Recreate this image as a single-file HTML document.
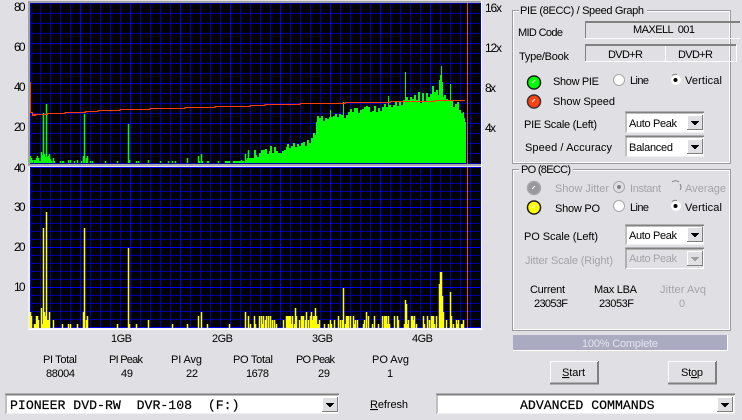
<!DOCTYPE html>
<html><head><meta charset="utf-8"><title>Scan</title>
<style>
html,body{margin:0;padding:0;background:#e0dfe3;width:742px;height:420px;overflow:hidden}
svg{display:block}
text{font-family:"Liberation Sans",sans-serif;font-size:11px;fill:#000;white-space:pre}
.a{font-size:12px}
.d{fill:#a4a4a8}
.m{font-family:"Liberation Mono",monospace;font-size:13.2px;stroke:#000;stroke-width:.2px}
</style></head><body>
<svg width="742" height="420" viewBox="0 0 742 420" xmlns="http://www.w3.org/2000/svg">
<defs>
<pattern id="vg" width="10" height="10" patternUnits="userSpaceOnUse"><rect width="1" height="10" fill="#0000b4"/></pattern>
<pattern id="ht" y="3" width="10" height="10" patternUnits="userSpaceOnUse"><rect width="10" height="1" fill="#0000a8"/></pattern>
<pattern id="hb" y="167" width="8" height="8" patternUnits="userSpaceOnUse"><rect width="8" height="1" fill="#0000a8"/></pattern>
<g id="arr" shape-rendering="crispEdges">
<rect width="16" height="15" fill="#e0dfe3"/>
<path d="M0 .5H15.5M.5 0V15" stroke="#fff" fill="none"/>
<path d="M0 14.5H16M15.5 0V15" stroke="#808080" fill="none"/>
<path d="M4 6h8v1h-1v1h-1v1h-1v1h-2v-1h-1v-1h-1v-1h-1z" fill="#000"/>
</g>
<g id="arrd" shape-rendering="crispEdges">
<rect width="16" height="15" fill="#e0dfe3"/>
<path d="M0 .5H15.5M.5 0V15" stroke="#fff" fill="none"/>
<path d="M0 14.5H16M15.5 0V15" stroke="#808080" fill="none"/>
<path d="M4 6h8v1h-1v1h-1v1h-1v1h-2v-1h-1v-1h-1v-1h-1z" fill="#a0a0a0"/>
</g>
</defs>

<!-- chart frames -->
<g shape-rendering="crispEdges">
<rect x="28" y="1" width="454" height="329" fill="#f4f4f6"/>
<rect x="28" y="1" width="2" height="328" fill="#a0a0a4"/>
<rect x="28" y="1" width="453" height="2" fill="#a0a0a4"/>
<rect x="30" y="3" width="451" height="161" fill="#000"/>
<rect x="30" y="167" width="451" height="161" fill="#000"/>
<rect x="30" y="3" width="451" height="161" fill="url(#vg)"/>
<rect x="30" y="167" width="451" height="161" fill="url(#vg)"/>
<rect x="30" y="3" width="451" height="161" fill="url(#ht)"/>
<rect x="30" y="167" width="451" height="161" fill="url(#hb)"/>
<path d="M30.5 3V164M80.5 3V164M130.5 3V164M180.5 3V164M230.5 3V164M280.5 3V164M330.5 3V164M380.5 3V164M430.5 3V164M30.5 167V328M80.5 167V328M130.5 167V328M180.5 167V328M230.5 167V328M280.5 167V328M330.5 167V328M380.5 167V328M430.5 167V328" stroke="#0000ff" fill="none"/>
<path d="M30 43.5H481M30 83.5H481M30 123.5H481" stroke="#0000c8" fill="none"/>
<path d="M30 167.5H481M30 207.5H481M30 247.5H481M30 287.5H481M30 327.5H481" stroke="#0000ff" fill="none"/>
<rect x="28" y="164" width="453" height="2" fill="#a8a8ac"/>
<rect x="28" y="166" width="453" height="1" fill="#e8e8ec"/>
<rect x="28" y="329" width="454" height="1" fill="#fff"/>
<rect x="28" y="167" width="2" height="162" fill="#f0f0f4"/>
<rect x="481" y="1" width="1" height="329" fill="#fff"/>
</g>

<!-- green left -->
<g transform="translate(.5,0)">
<path stroke="#00ff00" stroke-width="1.5" fill="none" d="M30 156V163M31 158V163M32 160V163M34 160V163M35 160V163M36 158V163M37 156V163M38 158V163M39 161V163M40 161V163M41 152V163M42 155V163M43 113V163M44 154V163M45 157V163M46 104V163M47 157V163M48 156V163M49 154V163M50 159V163M51 161V163M53 158V163M54 161V163M60 161V163M62 161V163M63 161V163M68 160V163M70 160V163M74 161V163M77 160V163M81 161V163M83 156V163M84 114V163M86 158V163M87 156V163M90 161V163M92 161V163M105 161V163M117 161V163M128 124V163M129 160V163M136 161V163M138 161V163M148 160V163M160 161V163M168 161V163M172 161V163M175 161V163M187 158V163M198 156V163M199 161V163M201 154V163M202 161V163M207 161V163M208 161V163M218 161V163M225 161V163M226 161V163M227 161V163M228 161V163M229 161V163M233 161V163M234 161V163M235 161V163M236 161V163M237 161V163M238 161V163M239 161V163M240 161V163M241 160V163M242 161V163M243 161V163M245 154V163M246 160V163M247 158V163M248 150V163M249 158V163"/>
</g>
<!-- green right -->
<path shape-rendering="crispEdges" fill="#00ff00" d="M250 163V158H254V150H256V155H257V157H259V153H261V150H265V149H267V154H269V151H270V146H272V153H274V147H276V151H278V153H282V151H284V150H286V147H287V144H289V148H291V146H293V143H295V147H297V144H299V146H301V143H303V142H305V146H307V140H309V143H311V138H313V133H315V135H316V122H317V116H319V118H321V116H323V121H325V118H327V119H329V117H330V110H331V117H333V116H335V114H337V117H339V114H341V115H343V102H344V118H346V115H348V112H350V109H352V112H354V108H358V113H360V110H362V109H364V107H366V106H368V107H370V112H372V111H374V106H376V112H378V108H380V111H382V107H384V104H386V107H388V96H389V105H391V107H393V105H395V102H397V106H399V102H401V105H403V100H405V72H406V97H408V100H410V97H412V99H414V95H416V100H418V92H420V103H422V93H424V102H426V93H428V97H430V94H432V86H434V92H436V90H438V95H439V80H440V75H441V66H442V82H443V97H444V95H446V99H448V100H450V84H451V100H453V107H455V104H457V102H459V110H461V113H463V112H464V118H465V122H466V163Z"/>
<!-- red speed -->
<path shape-rendering="crispEdges" fill="none" stroke="#ff3c00" d="M30.5 82V112.5H32.5V115.5H36V114.5H47V113.5H65V112.5H85V111.5H98V110.5H120V109.5H150V108.5H185V107.5H215V106.5H250V105.5H265V104.5H300V103.5H345V102.5H390V101.5H435V100.5H465"/>
<path shape-rendering="crispEdges" fill="none" stroke="#ff3c00" d="M33 114.5H48M66 112.5H86M99 110.5H120M150 108.5H185M215 106.5H250M265 104.5H300"/>
<rect x="467" y="3" width="1" height="161" fill="#f04818"/>
<rect x="467" y="167" width="1" height="161" fill="#f04818"/>

<!-- yellow -->
<g transform="translate(.5,0)">
<path stroke="#ffff00" stroke-width="1.5" fill="none" d="M30 312V328M31 316V328M34 324V328M35 324V328M36 316V328M37 316V328M38 320V328M41 308V328M42 324V328M43 228V328M44 312V328M45 316V328M46 212V328M47 320V328M48 320V328M49 312V328M53 320V328M62 324V328M68 324V328M70 324V328M77 324V328M83 312V328M84 228V328M86 320V328M87 316V328M117 324V328M128 248V328M129 324V328M136 324V328M148 320V328M172 324V328M187 324V328M198 316V328M201 312V328M207 324V328M229 324V328M245 312V328M248 316V328M250 324V328M254 316V328M255 324V328M259 316V328M261 316V328M262 324V328M263 316V328M265 320V328M266 316V328M268 316V328M270 316V328M272 320V328M274 320V328M276 324V328M283 320V328M286 316V328M287 316V328M288 316V328M289 316V328M290 316V328M291 324V328M292 316V328M294 324V328M295 308V328M296 316V328M299 320V328M301 316V328M302 316V328M303 316V328M305 320V328M306 312V328M308 320V328M310 316V328M311 312V328M312 320V328M313 316V328M314 316V328M315 308V328M316 316V328M317 324V328M318 324V328M319 320V328M324 324V328M328 324V328M330 320V328M331 324V328M334 320V328M338 316V328M340 320V328M342 320V328M343 288V328M345 324V328M346 316V328M347 316V328M348 316V328M350 316V328M353 316V328M354 324V328M355 320V328M357 320V328M363 324V328M364 320V328M366 312V328M368 316V328M372 324V328M374 316V328M378 324V328M382 316V328M384 316V328M385 316V328M386 316V328M387 324V328M388 316V328M389 324V328M394 316V328M397 316V328M398 320V328M404 324V328M405 300V328M406 304V328M407 324V328M408 320V328M411 316V328M412 316V328M413 320V328M414 316V328M416 324V328M423 316V328M424 324V328M427 316V328M429 320V328M431 316V328M432 316V328M433 316V328M434 324V328M436 316V328M439 284V328M440 272V328M441 272V328M442 296V328M443 312V328M446 320V328M450 292V328M451 316V328M453 324V328M456 320V328M457 324V328M458 320V328M461 324V328M462 324V328M463 320V328"/>
</g>

<!-- axis labels -->
<text class="a" x="14" y="11" textLength="11.5">80</text><text class="a" x="14" y="51" textLength="11.5">60</text><text class="a" x="14" y="91" textLength="11.5">40</text><text class="a" x="14" y="131" textLength="11.5">20</text>
<text class="a" x="14" y="172" textLength="11.5">40</text><text class="a" x="14" y="211" textLength="11.5">30</text><text class="a" x="14" y="251" textLength="11.5">20</text><text class="a" x="14" y="291" textLength="11.5">10</text>
<text class="a" x="485" y="12" textLength="17">16x</text><text class="a" x="485" y="52" textLength="17">12x</text><text class="a" x="485" y="92" textLength="11">8x</text><text class="a" x="485" y="132" textLength="11">4x</text>
<text x="111" y="342" textLength="21">1GB</text><text x="212" y="342" textLength="21">2GB</text><text x="312" y="342" textLength="21">3GB</text><text x="412" y="342" textLength="21">4GB</text>

<!-- stats -->
<text x="43" y="363" textLength="34">PI Total</text><text x="46" y="377" textLength="29">88004</text>
<text x="109" y="363" textLength="34">PI Peak</text><text x="121" y="377" textLength="12">49</text>
<text x="171" y="363" textLength="31">PI Avg</text><text x="186" y="377" textLength="12">22</text>
<text x="233" y="363" textLength="40">PO Total</text><text x="246" y="377" textLength="23">1678</text>
<text x="296" y="363" textLength="39">PO Peak</text><text x="318" y="377" textLength="12">29</text>
<text x="372" y="363" textLength="37">PO Avg</text><text x="387" y="377">1</text>

<!-- group boxes -->
<g shape-rendering="crispEdges" fill="none">
<rect x="512.5" y="10.5" width="218" height="153" stroke="#9c9ca0"/>
<rect x="513.5" y="11.5" width="216" height="151" stroke="#fff"/>
<rect x="512.5" y="169.5" width="218" height="161" stroke="#9c9ca0"/>
<rect x="513.5" y="170.5" width="216" height="159" stroke="#fff"/>
<rect x="519" y="6" width="128" height="10" fill="#e0dfe3"/>
<rect x="519" y="165" width="54" height="10" fill="#e0dfe3"/>
<!-- MID / type fields -->
<path d="M585.5 38V22.5H740M585 21.5H740" stroke="#808080"/>
<path d="M585 38.5H740" stroke="#fff"/>
<path d="M585.5 62V45.5H736M585 44.5H736" stroke="#808080"/>
<path d="M585 61.5H737M665.5 46V62M736.5 45V62" stroke="#fff"/>
</g>
<text x="520" y="14" textLength="124">PIE (8ECC) / Speed Graph</text>
<text x="521" y="173" textLength="50">PO (8ECC)</text>
<text x="518" y="36" textLength="45">MID Code</text>
<text x="633" y="33" textLength="62">MAXELL  001</text>
<text x="519" y="60" textLength="50">Type/Book</text>
<text x="608" y="58" textLength="35">DVD+R</text>
<text x="678" y="58" textLength="35">DVD+R</text>

<!-- LEDs -->
<circle cx="534" cy="82.5" r="6.5" fill="#00ff00" stroke="#1a1a1a" stroke-width="1.5"/>
<path d="M532 83l3-3" stroke="#fff" stroke-width="1"/>
<circle cx="534" cy="101.5" r="6.5" fill="#ff4010" stroke="#333" stroke-width="1.5"/>
<path d="M532 102l3-3" stroke="#fff" stroke-width="1"/>
<circle cx="534" cy="188" r="6.5" fill="#98989c" stroke="#a8a8ac" stroke-width="1.5"/>
<path d="M532 189l3-3" stroke="#fff" stroke-width="1"/>
<circle cx="534" cy="207.5" r="6.5" fill="#ffff00" stroke="#1a1a1a" stroke-width="1.5"/>
<path d="M532 208l3-3" stroke="#fff" stroke-width="1"/>

<!-- radios -->
<g>
<circle cx="619" cy="80" r="5.5" fill="#fff" stroke="#a8a8ac"/>
<circle cx="676" cy="80" r="5.5" fill="#fff" stroke="#e0dfe3"/><path d="M672 75.5a5.5 5.5 0 0 1 5-1" stroke="#808080" fill="none"/><circle cx="675.5" cy="80" r="2" fill="#000"/>
<circle cx="619" cy="187" r="5.5" fill="#e0dfe3" stroke="#a8a8ac"/><circle cx="619" cy="187" r="2" fill="#808084"/>
<path d="M672 182a5.5 5.5 0 0 1 7 0M680 184a5.5 5.5 0 0 1 0 6" stroke="#808084" fill="none"/>
<circle cx="619" cy="206" r="5.5" fill="#fff" stroke="#a8a8ac"/>
<circle cx="676" cy="206" r="5.5" fill="#fff" stroke="#e0dfe3"/><path d="M672 201.5a5.5 5.5 0 0 1 5-1" stroke="#808080" fill="none"/><circle cx="675.5" cy="206" r="2" fill="#000"/>
</g>
<text x="553" y="85" textLength="46">Show PIE</text>
<text x="553" y="105" textLength="62">Show Speed</text>
<text x="630" y="84" textLength="19">Line</text><text x="685" y="84" textLength="37">Vertical</text>
<text x="555" y="192" class="d" textLength="54">Show Jitter</text>
<text x="630" y="192" class="d" textLength="31">Instant</text><text x="685" y="192" class="d" textLength="41">Average</text>
<text x="555" y="212" textLength="45">Show PO</text>
<text x="630" y="211" textLength="19">Line</text><text x="685" y="211" textLength="37">Vertical</text>

<!-- small combos -->
<g shape-rendering="crispEdges" fill="none">
<rect x="625" y="112" width="79" height="21" fill="#fff"/><path d="M626 133V113H704M625 112H704" stroke="#808080" stroke-width="1.4"/><path d="M626 132.5H704M703.5 113V133" stroke="#f0f0f4"/>
<rect x="625" y="136" width="79" height="21" fill="#fff"/><path d="M626 157V137H704M625 136H704" stroke="#808080" stroke-width="1.4"/><path d="M626 156.5H704M703.5 137V157" stroke="#f0f0f4"/>
<rect x="625" y="225" width="79" height="20" fill="#fff"/><path d="M626 245V226H704M625 225H704" stroke="#808080" stroke-width="1.4"/><path d="M626 244.5H704M703.5 226V245" stroke="#f0f0f4"/>
<rect x="625" y="248" width="79" height="21" fill="#e0dfe3"/><path d="M626 269V249H704M625 248H704" stroke="#808080" stroke-width="1.4"/><path d="M626 268.5H704M703.5 249V269" stroke="#fff"/>
</g>
<use href="#arr" x="687" y="115"/>
<use href="#arr" x="687" y="139"/>
<use href="#arr" x="687" y="227"/>
<use href="#arrd" x="687" y="251"/>
<text x="524" y="128" textLength="73">PIE Scale (Left)</text>
<text x="525" y="151" textLength="87">Speed / Accuracy</text>
<text x="629" y="127" textLength="48">Auto Peak</text>
<text x="629" y="151" textLength="44">Balanced</text>
<text x="524" y="240" textLength="74">PO Scale (Left)</text>
<text x="525" y="264" class="d" textLength="88">Jitter Scale (Right)</text>
<text x="629" y="239" textLength="48">Auto Peak</text>
<text x="629" y="262" class="d" textLength="48">Auto Peak</text>

<text x="530" y="293" textLength="35">Current</text><text x="534" y="307" textLength="34">23053F</text>
<text x="594" y="293" textLength="43">Max LBA</text><text x="599" y="307" textLength="35">23053F</text>
<text x="660" y="293" class="d" textLength="46">Jitter Avq</text><text x="679" y="307" class="d">0</text>

<!-- progress -->
<g shape-rendering="crispEdges">
<rect x="513" y="335" width="215" height="16" fill="#fff"/>
<rect x="513" y="335" width="214" height="15" fill="#aaabc0"/>
</g>
<text x="582" y="347" textLength="76" style="fill:#e4e4ee">100% Complete</text>

<!-- buttons -->
<g shape-rendering="crispEdges" fill="none">
<path d="M550.5 384V361.5H598" stroke="#fff"/><path d="M550 384H598.5V361M550 383H597.5V362" stroke="#808080"/>
<path d="M668.5 384V361.5H716" stroke="#fff"/><path d="M668 384H716.5V361M668 383H715.5V362" stroke="#808080"/>
</g>
<text x="562" y="376" textLength="23"><tspan text-decoration="underline">S</tspan>tart</text>
<text x="681" y="376" textLength="22">St<tspan text-decoration="underline">o</tspan>p</text>
<text x="370" y="408" textLength="38"><tspan text-decoration="underline">R</tspan>efresh</text>

<!-- bottom combos -->
<g shape-rendering="crispEdges" fill="none">
<rect x="5" y="394" width="334" height="20" fill="#fff"/><path d="M6 414V395H339M5 394H339" stroke="#808080" stroke-width="1.4"/><path d="M6 413.5H339M338.5 395V414" stroke="#f0f0f4"/>
<rect x="436" y="394" width="299" height="20" fill="#fff"/><path d="M437 414V395H735M436 394H735" stroke="#808080" stroke-width="1.4"/><path d="M437 413.5H735M734.5 395V414" stroke="#f0f0f4"/>
</g>
<use href="#arr" x="322" y="397"/>
<use href="#arr" x="717" y="397"/>
<text x="10" y="409" class="m">PIONEER DVD-RW  DVR-108  (F:)</text>
<text x="520" y="409" class="m">ADVANCED COMMANDS</text>
</svg>
</body></html>
